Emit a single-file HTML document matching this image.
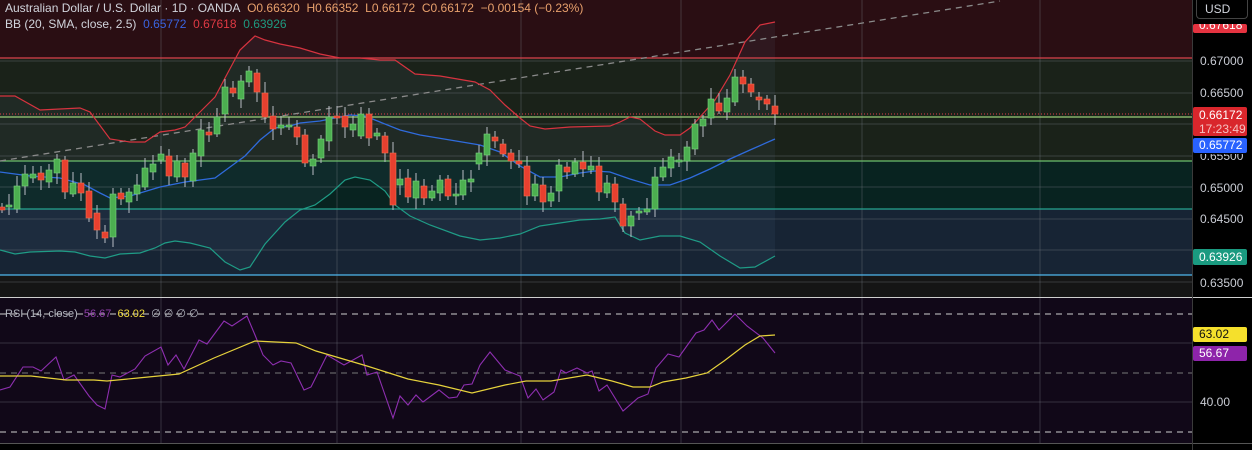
<!DOCTYPE html>
<html><head><meta charset="utf-8"><style>
body{margin:0;width:1252px;height:450px;overflow:hidden;background:#000;font-family:"Liberation Sans",sans-serif}
svg{position:absolute;left:0;top:0}
.t{position:absolute;font-size:12px;white-space:nowrap}
.ax{position:absolute;left:1200px;font-size:12px;color:#c9ccd4}
.lb{position:absolute;left:1193px;width:54px;font-size:12px;padding-left:6px;box-sizing:border-box;border-radius:2px;color:#fff}
</style></head><body>
<svg id="s" width="1252" height="450" xmlns="http://www.w3.org/2000/svg"></svg>
<div class="t" style="left:5px;top:1px;color:#d1d4dc">Australian Dollar / U.S. Dollar · 1D · OANDA&nbsp; <span style="color:#e8a06c">O0.66320&nbsp; H0.66352&nbsp; L0.66172&nbsp; C0.66172&nbsp; −0.00154 (−0.23%)</span></div>
<div class="t" style="left:5px;top:17px;color:#d1d4dc">BB (20, SMA, close, 2.5)&nbsp; <span style="color:#3a64e0">0.65772</span>&nbsp; <span style="color:#e03a44">0.67618</span>&nbsp; <span style="color:#1e9a80">0.63926</span></div>
<div class="t" style="left:5px;top:307px;color:#b2b5be;font-size:11px">RSI (14, close)&nbsp; <span style="color:#8e3ea8">56.67</span>&nbsp; <span style="color:#f0dc3c">63.02</span>&nbsp; ∅ ∅ ∅ ∅</div>
<div style="position:absolute;left:1196px;top:0;width:52px;height:19px;border:1px solid #444;border-top:none;border-radius:0 0 4px 4px;color:#d1d4dc;font-size:12px;line-height:19px;padding-left:8px;box-sizing:border-box">USD</div>
<div class="lb" style="top:24px;height:9px;background:#e53340;overflow:hidden;line-height:2px">0.67618</div>
<div class="ax" style="top:54px">0.67000</div>
<div class="ax" style="top:86px">0.66500</div>
<div class="lb" style="top:107px;height:29px;background:#d9262c;line-height:14px;padding-top:1px">0.66172<br><span style="color:#f5c0c0">17:23:49</span></div>
<div class="lb" style="top:138px;height:15px;background:#2962ff;line-height:15px">0.65772</div>
<div class="ax" style="top:149px;clip-path:inset(5px 0 0 0)">0.65500</div>
<div class="ax" style="top:181px">0.65000</div>
<div class="ax" style="top:212px">0.64500</div>
<div class="lb" style="top:249px;height:16px;background:#1a9a80;line-height:16px">0.63926</div>
<div class="ax" style="top:276px">0.63500</div>
<div class="lb" style="top:327px;height:15px;background:#f5e02c;color:#111;line-height:15px">63.02</div>
<div class="lb" style="top:346px;height:15px;background:#8e24aa;line-height:15px">56.67</div>
<div class="ax" style="top:395px">40.00</div>
<script>
const s=document.getElementById('s');let h='';
const R=(x,y,w,hh,c,o)=>h+=`<rect x="${x}" y="${y}" width="${w}" height="${hh}" fill="${c}" ${o||''}/>`;
const L=(x1,y1,x2,y2,c,w,d)=>h+=`<line x1="${x1}" y1="${y1}" x2="${x2}" y2="${y2}" stroke="${c}" stroke-width="${w||1}" ${d?`stroke-dasharray="${d}"`:''}/>`;
const P=(pts,c,w,f)=>h+=`<polyline points="${pts.map(p=>p.join(',')).join(' ')}" fill="${f||'none'}" stroke="${c}" stroke-width="${w||1}"/>`;
// main pane backgrounds
R(0,0,1192,58,'#2a0e13');R(0,58,1192,103,'#1a2219');R(0,161,1192,48,'#082320');R(0,209,1192,66,'#172434');R(0,275,1192,22,'#151515');
const up=[[0,96],[15,96],[40,110],[80,108],[90,112],[110,139],[130,142],[145,142],[160,132],[175,130],[185,127],[200,112],[215,97],[225,78],[240,50],[255,36],[265,40],[280,44],[300,48],[320,54],[340,58],[360,58],[380,60],[395,60],[415,74],[440,76],[475,82],[490,90],[505,105],[520,118],[530,126],[545,129],[570,127],[610,126],[620,122],[630,117],[640,119],[655,131],[665,135],[680,135],[690,128],[700,117],[715,100],[730,75],[745,42],[760,25],[775,22]];
const mid=[[0,172],[30,176],[60,178],[85,185],[100,193],[110,198],[130,196],[160,187],[185,182],[215,178],[230,167],[245,156],[260,140],[275,128],[290,126],[300,123],[320,121],[335,118],[350,115],[365,116],[380,122],[400,130],[420,135],[450,140],[480,145],[500,152],[520,166],[540,177],[560,177],[580,173],[595,171],[610,172],[630,179],[650,185],[670,185],[690,178],[710,169],[730,159],[750,150],[775,139]];
const lo=[[0,250],[15,254],[30,252],[60,251],[75,252],[90,256],[105,258],[120,254],[140,253],[155,248],[165,243],[175,241],[190,243],[210,248],[225,262],[240,270],[250,267],[265,244],[285,222],[300,210],[315,205],[330,194],[345,180],[355,177],[370,180],[385,191],[395,205],[410,216],[430,225],[460,236],[480,240],[500,238],[520,234],[540,226],[560,223],[580,220],[600,219],[615,217],[625,233],[640,240],[660,236],[680,236],[700,242],[720,256],[740,268],[755,267],[775,256]];
h+=`<polygon points="${up.concat(lo.slice().reverse()).map(p=>p.join(',')).join(' ')}" fill="rgba(120,160,200,0.07)"/>`;
// grid
[61,93,124,156,187,219,250,282].forEach(y=>L(0,y,1192,y,'rgba(120,125,135,0.35)'));
[161,337,521,681,862,1040].forEach(x=>{L(x,0,x,297,'rgba(120,125,135,0.35)');L(x,298,x,443,'rgba(120,125,135,0.35)')});
// horizontal level lines
L(0,58,1192,58,'#d9414b',1.3);L(0,117,1192,117,'#9bd07a',1.3);L(0,161,1192,161,'#6cc06c',1.3);L(0,209,1192,209,'#25a58f',1.3);L(0,275,1192,275,'#4fb7ee',1.3);
L(0,114,1192,114,'#e0404a',1,'1 2');
L(0,161,1000,1,'#8a8a8a',1.3,'6 5');
P(up,'#d7333f',1.2);P(mid,'#2f6bdc',1.3);P(lo,'#1f9c86',1.2);
// candles x,top,bottom,green
const c=[[2,207,210,0],[9,205,207,1],[17,186,209,1],[25,174,186,1],[33,174,178,1],[41,173,180,0],[49,170,182,1],[57,159,173,1],[65,160,192,0],[73,183,194,1],[81,183,193,0],[89,191,218,0],[97,213,230,0],[105,232,238,0],[113,194,237,1],[121,193,199,0],[129,192,202,1],[137,185,194,1],[145,168,187,1],[153,164,172,1],[161,154,160,1],[169,156,176,0],[177,161,177,1],[185,163,177,0],[193,153,181,1],[201,130,156,1],[209,132,135,0],[217,117,134,1],[225,87,114,1],[233,88,93,0],[241,81,99,1],[249,71,82,1],[257,73,92,0],[265,93,117,0],[273,116,129,0],[281,125,128,1],[289,125,127,1],[297,127,137,0],[305,135,163,0],[313,159,166,1],[321,139,158,1],[329,117,141,1],[337,116,118,0],[345,116,127,0],[353,124,130,1],[361,114,136,1],[369,114,138,0],[377,133,136,1],[385,136,153,0],[393,153,205,0],[400,179,185,1],[408,178,197,0],[416,181,198,1],[424,186,198,0],[432,191,198,1],[440,180,193,1],[448,179,196,0],[456,194,196,1],[463,180,195,1],[471,179,182,1],[479,153,164,1],[487,134,155,1],[495,137,141,0],[503,144,154,0],[511,153,161,0],[519,161,164,0],[527,166,196,0],[535,184,196,1],[543,185,202,0],[551,193,201,1],[559,165,191,1],[567,167,172,0],[575,162,174,1],[583,162,169,0],[591,166,170,1],[599,166,192,0],[607,183,193,1],[615,184,202,0],[623,204,226,0],[631,216,226,1],[639,211,213,1],[647,209,212,1],[655,177,209,1],[663,167,177,1],[671,157,168,1],[679,160,162,1],[687,147,161,1],[695,124,149,1],[703,119,126,1],[711,99,118,1],[719,103,111,0],[727,98,112,1],[735,77,102,1],[743,77,84,0],[751,84,92,0],[759,97,100,0],[767,99,104,0],[775,106,114,0]];
c.forEach((k,i)=>{const col=k[3]?'#4caf50':'#e8402f';const up=4+(i*7)%8,dn=3+(i*5)%9;
L(k[0],k[1]-up,k[0],k[2]+dn,'#b8bcc4',1);R(k[0]-3,k[1],6,Math.max(2,k[2]-k[1]),col,'stroke="'+(k[3]?'#7ad47e':'#f07050')+'" stroke-width="0.6"');});
// separator
R(0,297,1252,1,'#cfcfcf');
// RSI pane
R(0,298,1192,145,'#110818');
[343,402].forEach(y=>L(0,y,1192,y,'rgba(120,125,135,0.35)'));
[161,337,521,681,862,1040].forEach(x=>L(x,298,x,443,'rgba(120,125,135,0.35)'));
L(0,314,1192,314,'#d0d0d0',1,'6 5');L(0,373,1192,373,'#777',1,'6 5');L(0,432,1192,432,'#d0d0d0',1,'6 5');
P([[0,390],[10,387],[23,367],[33,367],[41,371],[56,357],[64,380],[74,375],[89,396],[97,405],[105,409],[112,375],[120,377],[135,369],[145,356],[161,347],[168,365],[176,355],[184,369],[199,340],[207,344],[224,321],[232,326],[247,316],[255,335],[263,355],[273,365],[281,361],[291,363],[304,390],[311,387],[327,355],[344,365],[362,355],[367,375],[377,372],[385,395],[393,418],[400,396],[408,405],[416,395],[423,402],[439,390],[449,398],[457,397],[464,385],[472,384],[480,365],[490,352],[505,370],[520,376],[528,398],[536,389],[543,400],[554,392],[561,370],[566,373],[577,368],[587,373],[592,371],[599,391],[607,385],[623,411],[638,398],[648,394],[656,368],[668,354],[679,357],[696,333],[704,330],[712,320],[719,330],[735,314],[747,326],[763,338],[775,353]],'#8e2fb0',1.1);
P([[0,376],[31,376],[66,380],[94,380],[107,381],[138,378],[179,374],[214,358],[255,341],[296,343],[316,351],[367,366],[408,379],[439,385],[472,393],[505,385],[526,381],[551,381],[587,375],[612,381],[633,387],[650,387],[663,382],[686,378],[707,373],[724,361],[745,345],[760,336],[775,335]],'#e6d23c',1.2);
R(0,443,1252,1,'#555');
R(1192,0,1,450,'#3a3a3a');
s.innerHTML=h;
</script>
</body></html>
